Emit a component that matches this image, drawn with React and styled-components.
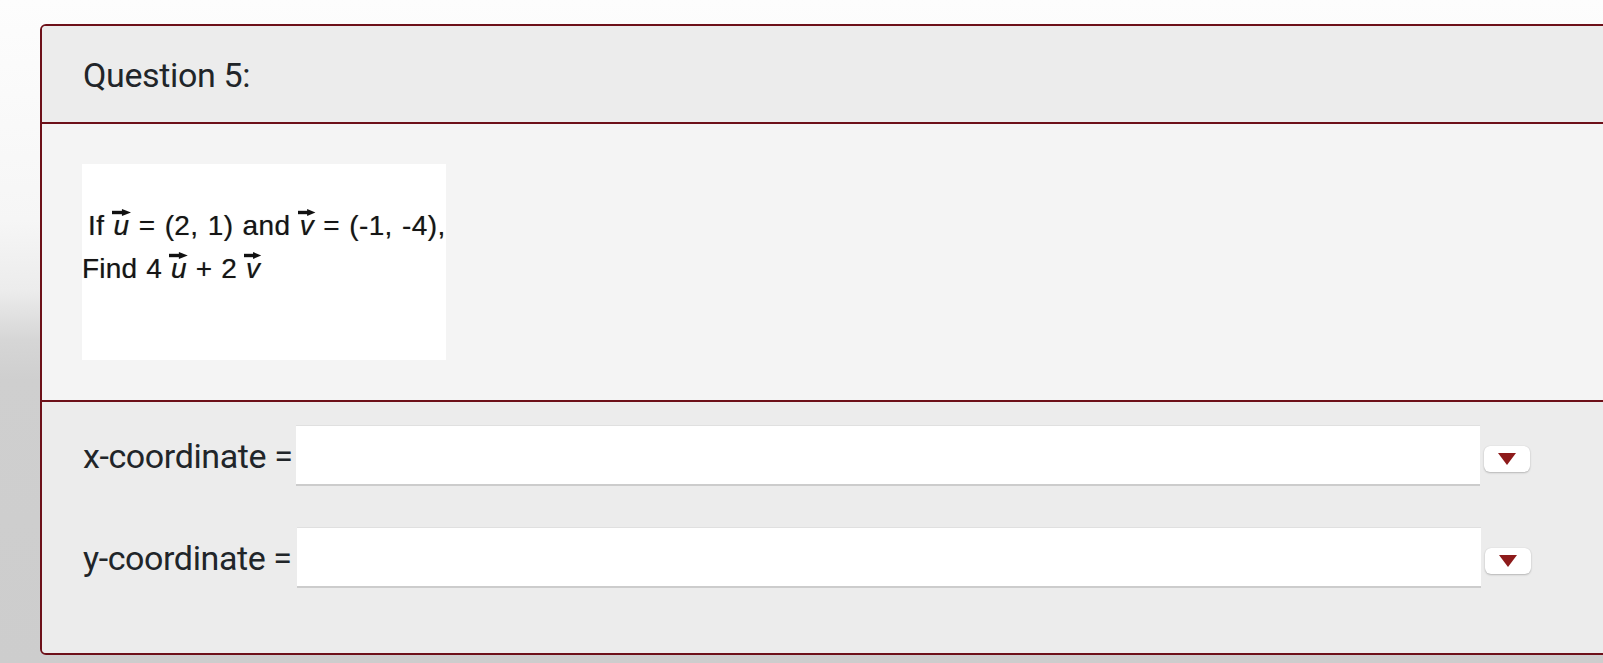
import React from "react";
import styled, { createGlobalStyle } from "styled-components";

const GlobalStyle = createGlobalStyle`
  html, body { margin: 0; padding: 0; }
  body { font-family: Roboto, "Noto Sans", sans-serif; color: #212529; overflow: hidden; }
`;

const Page = styled.div`
  min-height: 663px;
  box-sizing: border-box;
  padding: 24px 0 0 40px;
  background: linear-gradient(to bottom, #fdfdfd 0px, #f6f6f6 220px, #ececec 290px, #d6d6d6 340px, #cfcfcf 380px, #cdcdcd 663px);
  overflow: hidden;
`;

const Card = styled.section`
  width: 1640px;
  border: 2px solid #6d1019;
  border-radius: 6px 0 0 6px;
  overflow: hidden;
`;

const Header = styled.header`
  height: 98px;
  display: flex;
  align-items: center;
  padding: 2px 41px 0;
  box-sizing: border-box;
  background: #ececec;
  border-bottom: 2px solid #6d1019;
`;

const Title = styled.h2`
  margin: 0;
  font-size: 34px;
  font-weight: 400;
  letter-spacing: -0.35px;
  color: #212529;
`;

const Body = styled.div`
  height: 278px;
  box-sizing: border-box;
  padding: 40px 40px;
  background: #f4f4f4;
  border-bottom: 2px solid #6d1019;
`;

const Figure = styled.div`
  width: 364px;
  height: 196px;
  box-sizing: border-box;
  padding-top: 40px;
  background: #ffffff;
  font-family: "Liberation Sans", Arial, sans-serif;
  font-size: 28px;
  line-height: 43px;
  color: #151515;
  text-shadow: 0 0 0.7px rgba(0, 0, 0, 0.45);
  white-space: nowrap;
`;

const Line = styled.div`
  padding-left: ${(p) => (p.$indent ? "6px" : "0")};
  letter-spacing: ${(p) => (p.$tight ? "0.2px" : "0.4px")};
  word-spacing: 1px;
`;

const VecWrap = styled.span`
  position: relative;
  display: inline-block;
  font-style: italic;
`;

const Arrow = styled.svg`
  position: absolute;
  top: 5px;
  left: -2px;
  width: calc(100% + 3px);
  height: 7px;
  overflow: visible;
`;

const Vec = ({ children }) => (
  <VecWrap>
    {children}
    <Arrow viewBox="0 0 20 7" preserveAspectRatio="none">
      <rect x="0" y="1.8" width="13" height="3.4" fill="#111" />
      <polygon points="10.5,0 20,3.5 10.5,7" fill="#111" />
    </Arrow>
  </VecWrap>
);

const Answers = styled.div`
  height: 251px;
  box-sizing: border-box;
  padding: 23px 0 0 41px;
  background: #ececec;
  display: flex;
  flex-direction: column;
  gap: 41px;
`;

const Row = styled.div`
  display: flex;
  align-items: center;
`;

const Label = styled.label`
  font-size: 34px;
  letter-spacing: -0.4px;
  color: #212529;
  width: 213px;
  white-space: nowrap;
  flex: none;
`;

const Field = styled.input`
  width: 1184px;
  height: 61px;
  box-sizing: border-box;
  border: none;
  border-top: 1px solid #e0e0e0;
  border-bottom: 2px solid #cccccc;
  background: #ffffff;
  outline: none;
  padding: 0 12px;
  font-size: 24px;
  margin-left: ${(p) => p.$shift || 0}px;
`;

const DropButton = styled.button`
  width: 46px;
  height: 26px;
  margin: 7px 0 0 4px;
  padding: 0;
  border: none;
  border-radius: 6px;
  background: #ffffff;
  box-shadow: 0 1px 2px rgba(0, 0, 0, 0.22), 0 0 1px rgba(0, 0, 0, 0.15);
  display: flex;
  align-items: center;
  justify-content: center;
  cursor: pointer;
`;

const Caret = styled.span`
  width: 0;
  height: 0;
  border-left: 9.5px solid transparent;
  border-right: 9.5px solid transparent;
  border-top: 12px solid #8d1a1a;
  filter: blur(0.3px);
`;

export default function App() {
  return (
    <>
      <GlobalStyle />
      <Page>
        <Card>
          <Header>
            <Title>Question 5:</Title>
          </Header>
          <Body>
            <Figure>
              <Line $indent>
                If <Vec>u</Vec> = (2, 1) and <Vec>v</Vec> = (-1, -4),
              </Line>
              <Line $tight>
                Find 4 <Vec>u</Vec> + 2 <Vec>v</Vec>
              </Line>
            </Figure>
          </Body>
          <Answers>
            <Row>
              <Label>x-coordinate =</Label>
              <Field type="text" aria-label="x-coordinate" />
              <DropButton aria-label="options"><Caret /></DropButton>
            </Row>
            <Row>
              <Label>y-coordinate =</Label>
              <Field type="text" aria-label="y-coordinate" $shift={1} />
              <DropButton aria-label="options"><Caret /></DropButton>
            </Row>
          </Answers>
        </Card>
      </Page>
    </>
  );
}
